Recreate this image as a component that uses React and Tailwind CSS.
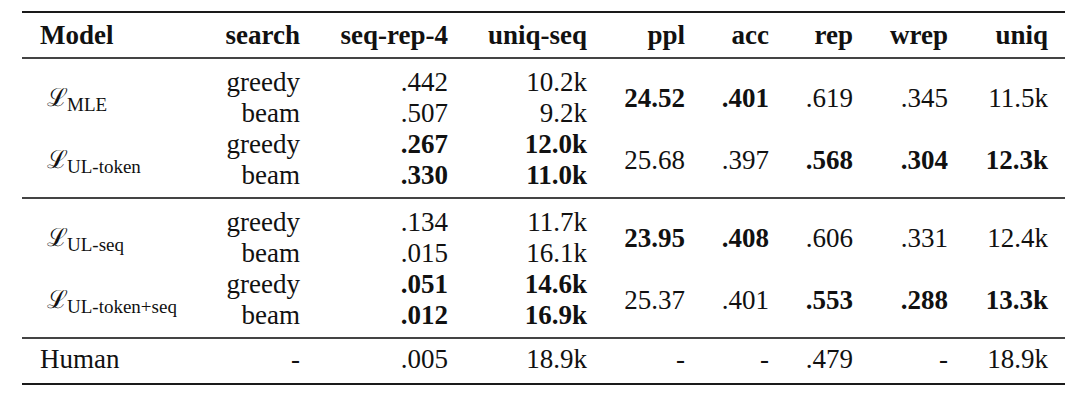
import React from "react";

const COLS = "grid grid-cols-[160px_100px_148px_139px_98px_84px_84px_95px_100px]";

function Label({ sub }) {
  return (
    <div className="flex items-baseline pl-[7px]">
      <span className="font-[family-name:'DejaVu_Serif',serif] text-[25px] leading-[31px]">ℒ</span>
      <span className="text-[19px] leading-[31px] relative top-[5px] -ml-[1px]">{sub}</span>
    </div>
  );
}

function V({ v }) {
  if (v && typeof v === "object") return <span className="font-bold">{v.b}</span>;
  return <span>{v}</span>;
}

function Pair({ sub, rows, metrics }) {
  return (
    <div className={`${COLS} grid-rows-[31px_31px] leading-[31px]`}>
      <div className="col-start-1 row-start-1 row-span-2 flex items-center">
        <Label sub={sub} />
      </div>
      <div className="col-start-2 row-start-1 text-right">{rows[0][0]}</div>
      <div className="col-start-3 row-start-1 text-right"><V v={rows[0][1]} /></div>
      <div className="col-start-4 row-start-1 text-right"><V v={rows[0][2]} /></div>
      <div className="col-start-2 row-start-2 text-right">{rows[1][0]}</div>
      <div className="col-start-3 row-start-2 text-right"><V v={rows[1][1]} /></div>
      <div className="col-start-4 row-start-2 text-right"><V v={rows[1][2]} /></div>
      <div className="col-start-5 row-start-1 row-span-2 flex items-center justify-end"><V v={metrics[0]} /></div>
      <div className="col-start-6 row-start-1 row-span-2 flex items-center justify-end"><V v={metrics[1]} /></div>
      <div className="col-start-7 row-start-1 row-span-2 flex items-center justify-end"><V v={metrics[2]} /></div>
      <div className="col-start-8 row-start-1 row-span-2 flex items-center justify-end"><V v={metrics[3]} /></div>
      <div className="col-start-9 row-start-1 row-span-2 flex items-center justify-end"><V v={metrics[4]} /></div>
    </div>
  );
}

export default function App() {
  return (
    <div className="w-[1080px] h-[402px] bg-white pt-[11px] font-[family-name:'Liberation_Serif',serif] text-[27px] text-[#111]">
      <div className="ml-[22px] w-[1043px]">
        <div className="h-[2px] bg-[#1a1a1a]" />
        <div className={`${COLS} px-[18px] pt-[7px] pb-[6px] font-bold leading-[31px]`}>
          <div>Model</div>
          <div className="text-right">search</div>
          <div className="text-right">seq-rep-4</div>
          <div className="text-right">uniq-seq</div>
          <div className="text-right">ppl</div>
          <div className="text-right">acc</div>
          <div className="text-right">rep</div>
          <div className="text-right">wrep</div>
          <div className="text-right">uniq</div>
        </div>
        <div className="h-[2px] bg-[#444]" />
        <div className="px-[18px] pt-[8px] pb-[6px]">
          <Pair
            sub="MLE"
            rows={[["greedy", ".442", "10.2k"], ["beam", ".507", "9.2k"]]}
            metrics={[{ b: "24.52" }, { b: ".401" }, ".619", ".345", "11.5k"]}
          />
          <Pair
            sub="UL-token"
            rows={[["greedy", { b: ".267" }, { b: "12.0k" }], ["beam", { b: ".330" }, { b: "11.0k" }]]}
            metrics={["25.68", ".397", { b: ".568" }, { b: ".304" }, { b: "12.3k" }]}
          />
        </div>
        <div className="h-[2px] bg-[#444]" />
        <div className="px-[18px] pt-[8px] pb-[6px]">
          <Pair
            sub="UL-seq"
            rows={[["greedy", ".134", "11.7k"], ["beam", ".015", "16.1k"]]}
            metrics={[{ b: "23.95" }, { b: ".408" }, ".606", ".331", "12.4k"]}
          />
          <Pair
            sub="UL-token+seq"
            rows={[["greedy", { b: ".051" }, { b: "14.6k" }], ["beam", { b: ".012" }, { b: "16.9k" }]]}
            metrics={["25.37", ".401", { b: ".553" }, { b: ".288" }, { b: "13.3k" }]}
          />
        </div>
        <div className="h-[2px] bg-[#444]" />
        <div className={`${COLS} px-[18px] pt-[5px] pb-[8px] leading-[31px]`}>
          <div>Human</div>
          <div className="text-right">-</div>
          <div className="text-right">.005</div>
          <div className="text-right">18.9k</div>
          <div className="text-right">-</div>
          <div className="text-right">-</div>
          <div className="text-right">.479</div>
          <div className="text-right">-</div>
          <div className="text-right">18.9k</div>
        </div>
        <div className="h-[2px] bg-[#1a1a1a]" />
      </div>
    </div>
  );
}
